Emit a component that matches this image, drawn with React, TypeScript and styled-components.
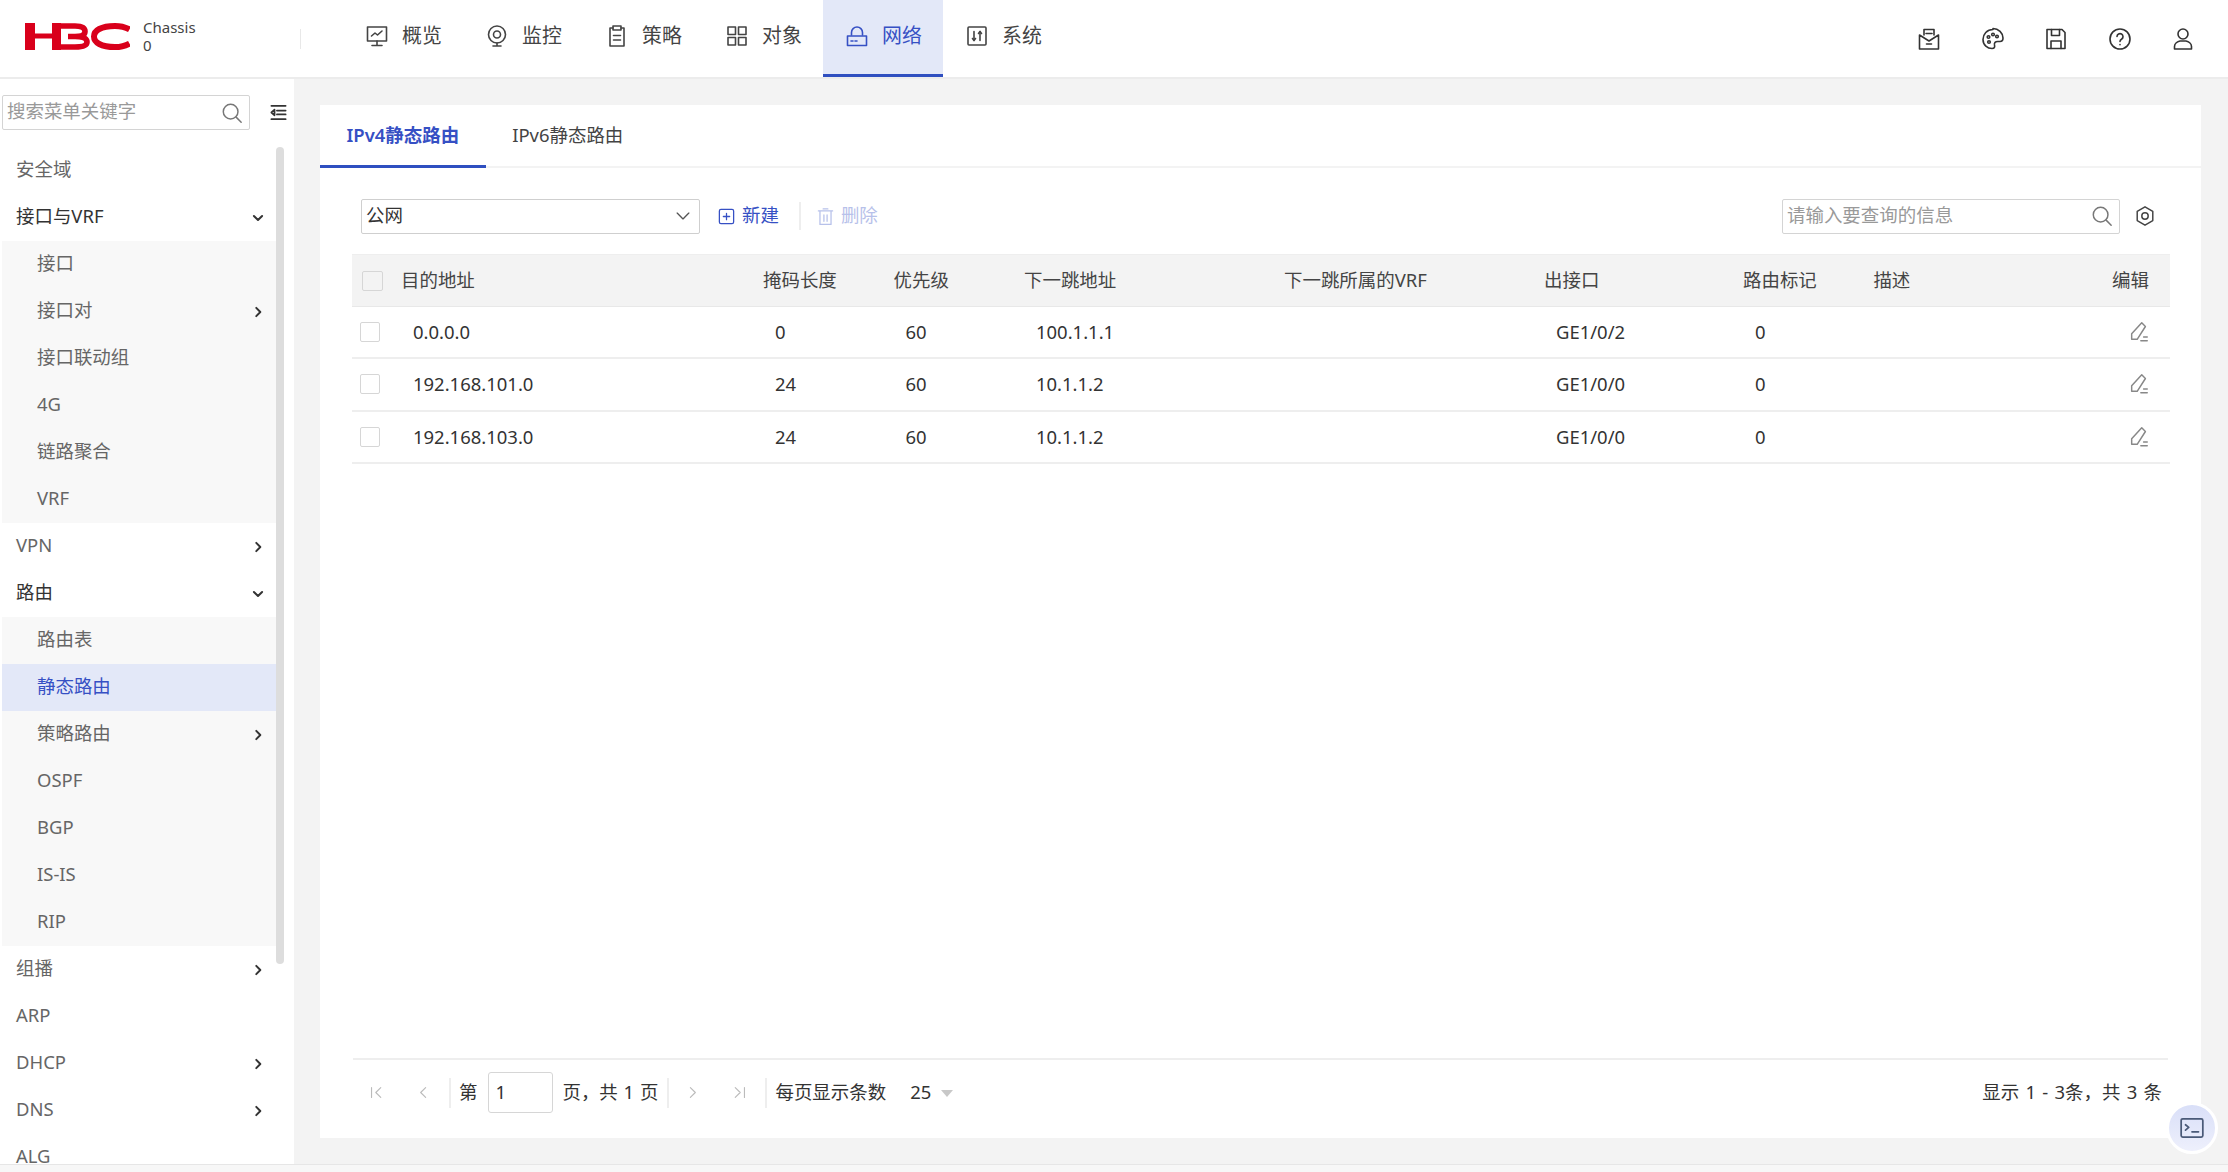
import React from "react";
import styled, { createGlobalStyle } from "styled-components";

const BLUE = "#3650c4";
const FONT = `"Noto Sans", "Noto Sans CJK SC", sans-serif`;

const Global = createGlobalStyle`
  html, body { margin: 0; padding: 0; background: #f3f3f3; }
  * { box-sizing: border-box; }
`;

const Page = styled.div`
  position: relative;
  width: 2228px;
  height: 1172px;
  overflow: hidden;
  display: flex;
  flex-direction: column;
  font: 18.47px/24px ${FONT};
  color: #333;
  background: #f3f3f3;
`;

/* ---------- header ---------- */
const Header = styled.header`
  flex: 0 0 78px;
  display: flex;
  align-items: stretch;
  background: #fff;
  border-bottom: 2px solid #ececec;
`;
const Brand = styled.div`
  flex: 0 0 300px;
  display: flex;
  align-items: center;
  padding: 0 0 4px 25px;
  gap: 13px;
`;
const BrandText = styled.div`
  font-size: 15px;
  line-height: 18px;
  color: #444;
  margin-top: -2px;
`;
const BrandDivider = styled.div`
  width: 1px;
  height: 20px;
  align-self: center;
  background: #e8e8e8;
  margin-right: 42px;
`;
const Nav = styled.nav`
  display: flex;
`;
const NavItem = styled.div<{ $active?: boolean }>`
  width: 120px;
  height: 77px;
  padding: 0 0 2px 22px;
  display: flex;
  align-items: center;
  gap: 13px;
  font-size: 19.9px;
  color: ${(p) => (p.$active ? BLUE : "#444")};
  background: ${(p) => (p.$active ? "#e3e8f8" : "transparent")};
  border-bottom: 3px solid ${(p) => (p.$active ? "#2f4fc0" : "transparent")};
`;
const Actions = styled.div`
  margin-left: auto;
  padding-right: 33px;
  display: flex;
  align-items: center;
  gap: 39.5px;
  color: #333;
`;

/* ---------- icons ---------- */
const Ico = styled.svg<{ $s?: number; $c?: string; $w?: number }>`
  flex: none;
  width: ${(p) => p.$s ?? 20}px;
  height: ${(p) => p.$s ?? 20}px;
  color: ${(p) => p.$c ?? "currentColor"};
  fill: none;
  stroke: currentColor;
  stroke-width: ${(p) => p.$w ?? 1.6};
  stroke-linecap: round;
  stroke-linejoin: round;
`;
type IP = { s?: number; c?: string; w?: number };
const I = ({ s, c, w, children }: IP & { children: React.ReactNode }) => (
  <Ico viewBox="0 0 24 24" $s={s} $c={c} $w={w}>{children}</Ico>
);
const Logo = () => (
  <svg width="105" height="27" viewBox="0 0 105 27" fill="none">
    <path d="M0 0h10v10.500h17V0h9v27h-9V15.500H10V27H0z" fill="#d9001b" />
    <path
      d="M36 3h14c7 0 10 2 10 5.500S57 13.500 50 13.500h-7M50 13.500c8 0 12 2 12 5.500s-4 5-12 5H36"
      stroke="#d9001b"
      strokeWidth="5.600"
    />
    <path
      d="M104.500 6.500C100 4 95 3 90 3 76 3 69 7.500 69 13.500S76 24 90 24c5 0 10-1 14.500-3.500"
      stroke="#d9001b"
      strokeWidth="6"
    />
  </svg>
);
const IOverview = (p: IP) => <I {...p}><rect x="2.500" y="3" width="19" height="14" /><path d="M6.500 12l3.500-3 2.500 2 4.500-4M12 17v4M7 21.500h10" /></I>;
const IMonitor = (p: IP) => <I {...p}><circle cx="12" cy="10.500" r="8.500" /><circle cx="12" cy="10.500" r="3.500" /><path d="M8 22h8M12 19v3" /></I>;
const IPolicy = (p: IP) => <I {...p}><path d="M8 4H5v18h14V4h-3" /><rect x="8" y="2" width="8" height="4" /><path d="M8.500 11.500h7M8.500 16h7" /></I>;
const IObject = (p: IP) => <I {...p}><rect x="3" y="3" width="7.500" height="7.500" /><rect x="13.500" y="3" width="7.500" height="7.500" /><rect x="3" y="13.500" width="7.500" height="7.500" /><rect x="13.500" y="13.500" width="7.500" height="7.500" /></I>;
const INetwork = (p: IP) => <I {...p}><path d="M6.500 11V8.500a5.500 5.500 0 0 1 11 0V11" /><path d="M2.500 12h19v9.500h-19z" /><path d="M6 17h2M10 17h2" /></I>;
const ISystem = (p: IP) => <I {...p}><rect x="3" y="3" width="18" height="18" rx="1" /><path d="M9 7.500v9M15 7.500v9" /><path d="M7.500 14.500L9 16.500l1.500-2M13.500 9.500L15 7.500l1.500 2" /></I>;
const IInbox = (p: IP) => <I {...p}><path d="M7 8V2.500h10V8" /><path d="M2.500 8l9.500 6 9.500-6v14h-19z" /><path d="M9 6.500h6M9.500 17h5" /></I>;
const IPalette = (p: IP) => <I {...p}><path d="M12 2.500C6 2.500 2 7 2 12.500s4.500 9 9 9c2.500 0 3-1.500 2.500-3.500-.5-2.500 1-3.500 3-3.500h2.500c2 0 3-1.500 3-3.500 0-5-4.500-9.500-10-9.500z" /><circle cx="7.500" cy="10" r="1.300" /><circle cx="12" cy="7.500" r="1.300" /><circle cx="16" cy="9.500" r="1.300" /><circle cx="8" cy="15" r="1.300" /></I>;
const ISave = (p: IP) => <I {...p}><path d="M3 2.500h15l3 3v16H3z" /><path d="M7.500 2.500v6h8v-6M7 21.500V14h10v7.500" /></I>;
const IHelp = (p: IP) => <I {...p}><circle cx="12" cy="12" r="10" /><path d="M9 9.500a3 3 0 1 1 4.500 2.700c-1 .6-1.500 1.300-1.500 2.300M12 17.500v.3" /></I>;
const IUser = (p: IP) => <I {...p}><circle cx="12" cy="7" r="5" /><path d="M3.500 22v-2.500c0-3 3-5 5.500-5.500h6c2.500.5 5.500 2.500 5.500 5.500V22z" /></I>;
const ISearch = (p: IP) => <I {...p}><circle cx="10.500" cy="10.500" r="8" /><path d="M16.500 16.500L22 22" /></I>;
const ICollapse = (p: IP) => <I {...p}><path d="M3 3.500h18M10 9.500h11M10 14.500h11M3 20.500h18M7 8.500L3 12l4 3.500z" /></I>;
const IChevDown = (p: IP) => <I {...p}><path d="M5 8.500l7 7 7-7" /></I>;
const IGear = (p: IP) => <I {...p}><path d="M12 2l8.500 5v10L12 22l-8.500-5V7z" /><circle cx="12" cy="12" r="3.500" /></I>;
const IPlus = (p: IP) => <I {...p}><rect x="3" y="3" width="18" height="18" rx="2" /><path d="M12 8v8M8 12h8" /></I>;
const ITrash = (p: IP) => <I {...p}><path d="M5 6v16h14V6M3 5h18M9 2.500h6M10 10v8M14 10v8" /></I>;
const IEdit = (p: IP) => <I {...p}><path d="M15 2l4 4-9 14H4v-6z" /><path d="M14 21.500h7M17 17.500h4" /></I>;
const IFirst = (p: IP) => <I {...p}><path d="M5 5v14M18 5l-7 7 7 7" /></I>;
const IPrev = (p: IP) => <I {...p}><path d="M15 5l-7 7 7 7" /></I>;
const INext = (p: IP) => <I {...p}><path d="M9 5l7 7-7 7" /></I>;
const ILast = (p: IP) => <I {...p}><path d="M19 5v14M6 5l7 7-7 7" /></I>;

/* ---------- body ---------- */
const Body = styled.div`
  flex: 1;
  display: flex;
  min-height: 0;
`;
const Sidebar = styled.aside`
  flex: 0 0 294px;
  background: #fff;
  display: flex;
  flex-direction: column;
  overflow: hidden;
`;
const SideTop = styled.div`
  flex: 0 0 68px;
  padding: 16px 0 0 2px;
  display: flex;
  align-items: flex-start;
  gap: 19px;
  color: #333;
`;
const InputBox = styled.div<{ $w: number }>`
  flex: none;
  width: ${(p) => p.$w}px;
  height: 35px;
  padding: 0 6px 3px 4px;
  display: flex;
  align-items: center;
  justify-content: space-between;
  border: 1px solid #d4d4d4;
  border-radius: 2px;
  color: #999;
  background: #fff;
  svg { margin-top: 3px; }
`;
const CollapseSlot = styled.div`
  padding-top: 8px;
  line-height: 0;
`;
const SideScroll = styled.div`
  flex: 1;
  display: flex;
  padding-left: 2px;
  min-height: 0;
`;
const Menu = styled.div`
  flex: 0 0 274px;
`;
const ScrollThumb = styled.div`
  flex: 0 0 8px;
  height: 817px;
  border-radius: 4px;
  background: #dddddd;
`;
const SubMenu = styled.div`
  background: #f8f8f8;
`;
const MenuRow = styled.div<{ $sub?: boolean; $open?: boolean; $active?: boolean }>`
  height: 47px;
  display: flex;
  align-items: center;
  justify-content: space-between;
  padding: 0 11px 4px ${(p) => (p.$sub ? 35 : 14)}px;
  color: ${(p) => (p.$active ? BLUE : p.$open ? "#333" : "#666")};
  background: ${(p) => (p.$active ? "#e3e8f8" : "transparent")};
`;
const MenuArrow = styled.span`
  line-height: 0;
  color: #333;
  margin-top: 4px;
`;

const Content = styled.main`
  flex: 1;
  padding: 26px 27px 26px 26px;
  min-width: 0;
`;
const Card = styled.section`
  height: 100%;
  background: #fff;
  display: flex;
  flex-direction: column;
`;
const Tabs = styled.div`
  flex: 0 0 63px;
  min-height: 0;
  display: flex;
  border-bottom: 2px solid #f3f3f3;
`;
const Tab = styled.div<{ $active?: boolean }>`
  height: 63px;
  margin-bottom: -2px;
  padding: 0 26.500px;
  display: flex;
  align-items: center;
  font-weight: ${(p) => (p.$active ? 600 : 400)};
  color: ${(p) => (p.$active ? BLUE : "#444")};
  border-bottom: 3px solid ${(p) => (p.$active ? "#2f4fc0" : "transparent")};
`;
const Toolbar = styled.div`
  margin: 31px 0 0 41px;
  display: flex;
  align-items: center;
  height: 34px;
`;
const SelectBox = styled(InputBox)`
  color: #333;
  padding-right: 6px;
  border-color: #cfcfcf;
`;
const ToolBtn = styled.div<{ $off?: boolean; $ml: number }>`
  margin-left: ${(p) => p.$ml}px;
  padding-bottom: 3px;
  display: flex;
  align-items: center;
  gap: 6px;
  color: ${(p) => (p.$off ? "#b7c1ea" : BLUE)};
  svg { margin-top: 3px; }
`;
const ToolDivider = styled.div`
  width: 2px;
  height: 28px;
  margin-left: 20px;
  background: #eeeeee;
`;
const ToolRight = styled.div`
  margin-left: auto;
  margin-right: 45px;
  display: flex;
  align-items: center;
  gap: 14px;
  color: #444;
`;

const Table = styled.div`
  flex: 1;
  margin: 21px 31px 0 32px;
`;
const GRID = "49px 362px 130.500px 130.500px 260px 260px 199px 130.400px 120px 1fr";
const HeadRow = styled.div`
  height: 53px;
  display: grid;
  grid-template-columns: ${GRID};
  align-items: center;
  background: #f3f3f3;
  border-top: 1px solid #eeeeee;
  border-bottom: 1px solid #e8e8e8;
`;
const Row = styled.div`
  height: 52.33px;
  display: grid;
  grid-template-columns: ${GRID};
  align-items: center;
  border-bottom: 2px solid #eeeeee;
`;
const Check = styled.div<{ $head?: boolean }>`
  width: ${(p) => (p.$head ? 21 : 20)}px;
  height: 20px;
  margin-left: ${(p) => (p.$head ? 10 : 8)}px;
  border: 1px solid #d6d6d6;
  border-radius: 2px;
  background: ${(p) => (p.$head ? "#f3f3f3" : "#fff")};
`;
const HeadCell = styled.div`
  padding-bottom: 2px;
  white-space: nowrap;
  color: #444;
`;
const Cell = styled.div`
  padding-left: 12px;
  white-space: nowrap;
  color: #333;
`;
const EndCell = styled.div`
  padding-right: 20px;
  display: flex;
  justify-content: flex-end;
  color: #888;
  line-height: 0;
`;
const HeadEnd = styled(HeadCell)`
  padding-right: 21px;
  text-align: right;
`;

const Footer = styled.footer`
  flex: 0 0 80px;
  margin: 0 33px 0 33px;
  display: flex;
  align-items: center;
  justify-content: space-between;
  border-top: 2px solid #eeeeee;
  padding-bottom: 13px;
`;
const Pager = styled.div`
  display: flex;
  align-items: center;
`;
const PageBtn = styled.div`
  width: 47px;
  display: flex;
  justify-content: center;
  color: #bbbbbb;
  line-height: 0;
`;
const PageDivider = styled.div<{ $ml?: number }>`
  width: 2px;
  height: 30px;
  margin-left: ${(p) => p.$ml ?? 2}px;
  background: #eeeeee;
`;
const PageText = styled.span<{ $ml: number }>`
  margin-left: ${(p) => p.$ml}px;
  padding-bottom: 2px;
  word-spacing: 1px;
  white-space: nowrap;
  color: #333;
`;
const PageInput = styled.div`
  width: 65px;
  height: 41px;
  margin-left: 11px;
  padding: 0 0 2px 6px;
  display: flex;
  align-items: center;
  border: 1px solid #d6d6d6;
  border-radius: 3px;
`;
const Caret = styled.span`
  width: 0;
  height: 0;
  margin: 2px 0 0 10px;
  border-left: 6px solid transparent;
  border-right: 6px solid transparent;
  border-top: 7px solid #c8c8c8;
`;
const Total = styled.div`
  padding: 0 6px 2px 0;
  word-spacing: 1.5px;
  white-space: nowrap;
  color: #333;
`;
const FloatBtn = styled.div`
  position: absolute;
  left: 2166px;
  top: 1102px;
  width: 52px;
  height: 52px;
  border-radius: 50%;
  display: flex;
  align-items: center;
  justify-content: center;
  border: 3px solid #fff;
  background: linear-gradient(180deg, #d9dff8, #eef0fc);
  color: #4a5a78;
`;
const BottomStrip = styled.div`
  flex: 0 0 8px;
  background: #f7f7f7;
  border-top: 1px solid #e6e6e6;
`;

type MenuNode = { t: string; arrow?: "r" | "d"; open?: boolean; sub?: { t: string; arrow?: boolean; active?: boolean }[] };
const menu: MenuNode[] = [
  { t: "安全域" },
  {
    t: "接口与VRF", arrow: "d", open: true,
    sub: [{ t: "接口" }, { t: "接口对", arrow: true }, { t: "接口联动组" }, { t: "4G" }, { t: "链路聚合" }, { t: "VRF" }],
  },
  { t: "VPN", arrow: "r" },
  {
    t: "路由", arrow: "d", open: true,
    sub: [
      { t: "路由表" }, { t: "静态路由", active: true }, { t: "策略路由", arrow: true },
      { t: "OSPF" }, { t: "BGP" }, { t: "IS-IS" }, { t: "RIP" },
    ],
  },
  { t: "组播", arrow: "r" },
  { t: "ARP" },
  { t: "DHCP", arrow: "r" },
  { t: "DNS", arrow: "r" },
  { t: "ALG" },
];

const navs = [
  { t: "概览", I: IOverview }, { t: "监控", I: IMonitor }, { t: "策略", I: IPolicy },
  { t: "对象", I: IObject }, { t: "网络", I: INetwork, active: true }, { t: "系统", I: ISystem },
];
const heads = ["目的地址", "掩码长度", "优先级", "下一跳地址", "下一跳所属的VRF", "出接口", "路由标记", "描述"];
const rows = [
  ["0.0.0.0", "0", "60", "100.1.1.1", "", "GE1/0/2", "0", ""],
  ["192.168.101.0", "24", "60", "10.1.1.2", "", "GE1/0/0", "0", ""],
  ["192.168.103.0", "24", "60", "10.1.1.2", "", "GE1/0/0", "0", ""],
];

export default function App() {
  return (
    <Page>
      <Global />
      <Header>
        <Brand>
          <Logo />
          <BrandText>Chassis<br />0</BrandText>
        </Brand>
        <BrandDivider />
        <Nav>
          {navs.map((n) => (
            <NavItem key={n.t} $active={n.active}>
              <n.I s={24} />
              {n.t}
            </NavItem>
          ))}
        </Nav>
        <Actions>
          <IInbox s={24} /><IPalette s={24} /><ISave s={24} /><IHelp s={24} /><IUser s={24} />
        </Actions>
      </Header>
      <Body>
        <Sidebar>
          <SideTop>
            <InputBox $w={248}>
              搜索菜单关键字
              <ISearch s={22} c="#777" />
            </InputBox>
            <CollapseSlot><ICollapse s={19} w={2.2} /></CollapseSlot>
          </SideTop>
          <SideScroll>
            <Menu>
              {menu.map((m) => (
                <React.Fragment key={m.t}>
                  <MenuRow $open={m.open}>
                    {m.t}
                    {m.arrow && (
                      <MenuArrow>
                        {m.arrow === "d" ? <IChevDown s={14} w={3.4} /> : <INext s={14} w={3.4} />}
                      </MenuArrow>
                    )}
                  </MenuRow>
                  {m.sub && (
                    <SubMenu>
                      {m.sub.map((s) => (
                        <MenuRow key={s.t} $sub $active={s.active}>
                          {s.t}
                          {s.arrow && <MenuArrow><INext s={14} w={3.4} /></MenuArrow>}
                        </MenuRow>
                      ))}
                    </SubMenu>
                  )}
                </React.Fragment>
              ))}
            </Menu>
            <ScrollThumb />
          </SideScroll>
        </Sidebar>
        <Content>
          <Card>
            <Tabs>
              <Tab $active>IPv4静态路由</Tab>
              <Tab>IPv6静态路由</Tab>
            </Tabs>
            <Toolbar>
              <SelectBox $w={339}>
                公网
                <IChevDown s={20} c="#555" />
              </SelectBox>
              <ToolBtn $ml={17}><IPlus s={19} />新建</ToolBtn>
              <ToolDivider />
              <ToolBtn $off $ml={15}><ITrash s={19} />删除</ToolBtn>
              <ToolRight>
                <InputBox $w={338}>
                  请输入要查询的信息
                  <ISearch s={22} c="#777" />
                </InputBox>
                <IGear s={22} />
              </ToolRight>
            </Toolbar>
            <Table>
              <HeadRow>
                <Check $head />
                {heads.map((h) => <HeadCell key={h}>{h}</HeadCell>)}
                <HeadEnd>编辑</HeadEnd>
              </HeadRow>
              {rows.map((r) => (
                <Row key={r[0]}>
                  <Check />
                  {r.map((c, i) => <Cell key={i}>{c}</Cell>)}
                  <EndCell><IEdit s={22} /></EndCell>
                </Row>
              ))}
            </Table>
            <Footer>
              <Pager>
                <PageBtn><IFirst s={17} /></PageBtn>
                <PageBtn><IPrev s={17} /></PageBtn>
                <PageDivider />
                <PageText $ml={8}>第</PageText>
                <PageInput>1</PageInput>
                <PageText $ml={9}>页，共 1 页</PageText>
                <PageDivider $ml={9} />
                <PageBtn><INext s={17} /></PageBtn>
                <PageBtn><ILast s={17} /></PageBtn>
                <PageDivider />
                <PageText $ml={8}>每页显示条数</PageText>
                <PageText $ml={24}>25</PageText>
                <Caret />
              </Pager>
              <Total>显示 1 - 3条，共 3 条</Total>
            </Footer>
          </Card>
        </Content>
      </Body>
      <BottomStrip />
      <FloatBtn>
        <I s={26}>
          <rect x="2" y="3.500" width="20" height="17" rx="1.500" />
          <path d="M6 9l3 2.500L6 14M12 15.500h6" />
        </I>
      </FloatBtn>
    </Page>
  );
}
